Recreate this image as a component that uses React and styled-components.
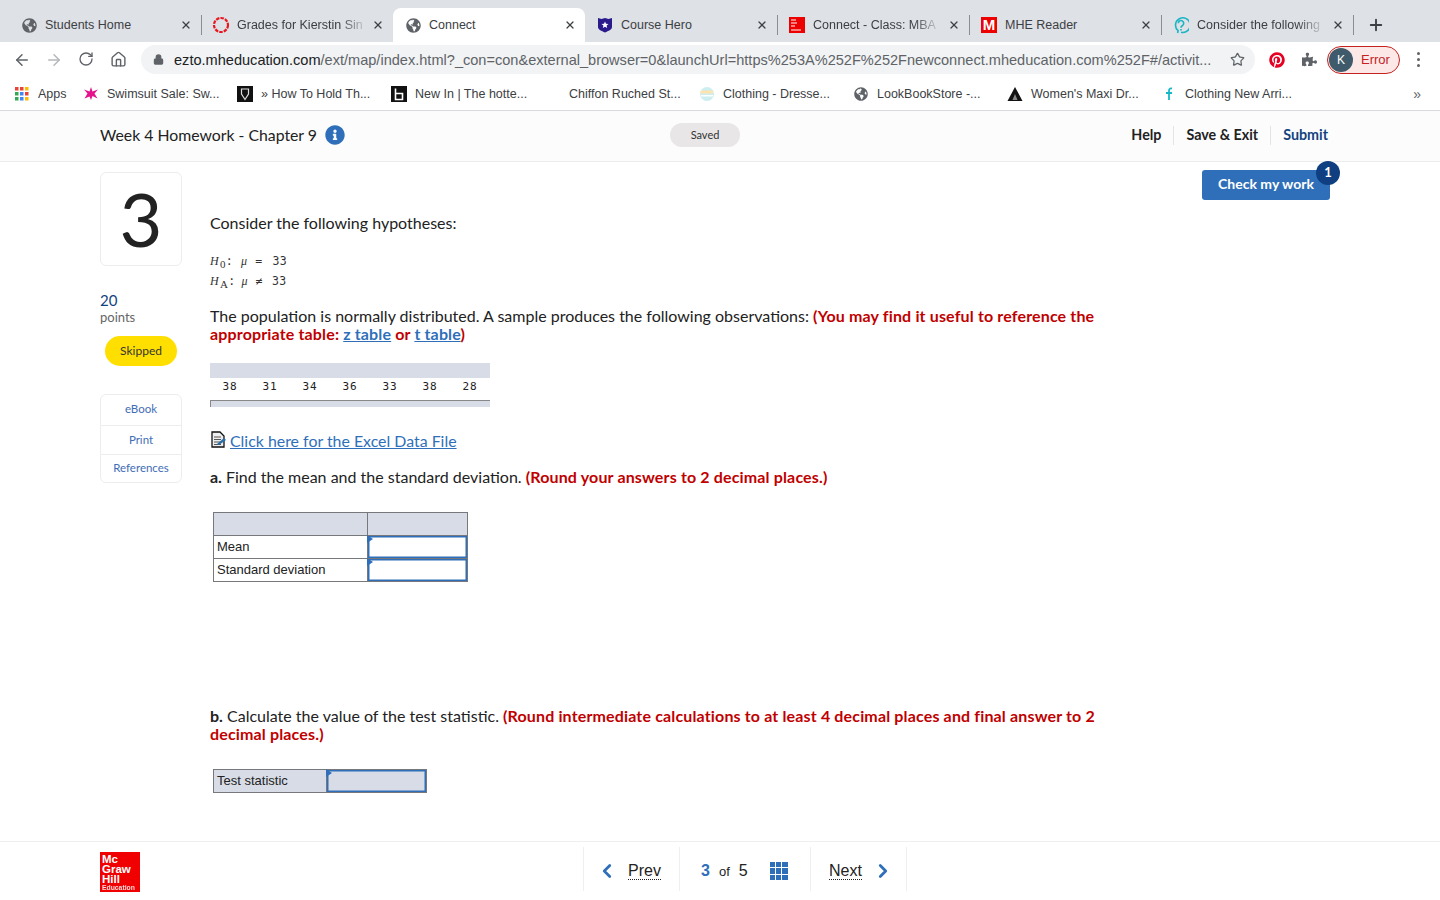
import React from 'react'
import styled, { createGlobalStyle } from 'styled-components'
import { ArrowLeft, ArrowRight, RotateCw, Home, Star, ChevronLeft, ChevronRight, Plus, X, Lock } from 'lucide-react'
import { FaGlobeAmericas, FaPinterest, FaPuzzlePiece, FaInfoCircle } from 'react-icons/fa'

const Global = createGlobalStyle`
  html, body { margin: 0; padding: 0; background: #fff; }
  body { font-family: 'Lato', 'Open Sans', sans-serif; color: #222; }
  * { box-sizing: border-box; }
`
const Window = styled.div`
  width: 1440px;
  height: 900px;
  display: flex;
  flex-direction: column;
  overflow: hidden;
`
const TabStrip = styled.div`
  height: 42px;
  flex: none;
  background: #dee1e6;
  display: flex;
  align-items: flex-end;
  padding-left: 9px;
`
const TabItem = styled.div`
  position: relative;
  width: 192px;
  height: 34px;
  flex: none;
  display: flex;
  align-items: center;
  padding: 0 9px 0 12px;
  border-radius: 8px 8px 0 0;
  background: ${p => (p.$active ? '#fff' : 'transparent')};
  font: 12.5px 'Liberation Sans', sans-serif;
  color: #3c4043;
  &::after {
    content: '';
    display: ${p => (p.$divider ? 'block' : 'none')};
    position: absolute;
    right: -1px;
    top: 7px;
    height: 20px;
    width: 1px;
    background: #8a8d91;
  }
`
const TabIcon = styled.span`
  width: 16px;
  height: 16px;
  flex: none;
  display: flex;
  align-items: center;
  justify-content: center;
  margin-right: 8px;
  color: #5f6368;
`
const TabTitle = styled.span`
  flex: 1;
  min-width: 0;
  white-space: nowrap;
  overflow: hidden;
`
const FadeText = styled.span`
  display: inline-block;
  -webkit-mask-image: ${p => (p.$fade ? 'linear-gradient(to right, #000 82%, rgba(0,0,0,.2))' : 'none')};
`
const MFav = styled.span`
  width: 16px;
  height: 16px;
  background: #ec0000;
  color: #fff;
  font: bold 15px/16px 'Liberation Sans', sans-serif;
  text-align: center;
`
const NewTab = styled.span`
  margin-left: 14px;
  height: 34px;
  display: flex;
  align-items: center;
  color: #3c4043;
`
const Toolbar = styled.div`
  height: 35px;
  flex: none;
  display: flex;
  align-items: center;
  background: #fff;
`
const NavIcon = styled.span`
  width: 32px;
  display: flex;
  justify-content: center;
  color: ${p => (p.$muted ? '#b5b8bb' : '#5f6368')};
`
const NavGroup = styled.div`
  display: flex;
  padding-left: 6px;
  width: 141px;
`
const Omnibox = styled.div`
  width: 1114px;
  height: 29px;
  border-radius: 15px;
  background: #f1f3f4;
  display: flex;
  align-items: center;
  padding-left: 12px;
  color: #5f6368;
`
const Url = styled.div`
  width: 1038px;
  margin-left: 10px;
  font: 14.57px 'Liberation Sans', sans-serif;
  color: #5f6368;
  white-space: nowrap;
  overflow: hidden;
  b { font-weight: 400; color: #202124; }
`
const StarWrap = styled.span`
  margin-left: 18px;
  display: flex;
  color: #5f6368;
`
const ExtIcon = styled.span`
  display: flex;
  color: ${p => p.$color};
  margin-left: ${p => p.$left}px;
`
const ErrorPill = styled.div`
  width: 73px;
  height: 28px;
  margin-left: 10px;
  border: 1px solid #c5221f;
  border-radius: 14px;
  background: #fce8e6;
  display: flex;
  align-items: center;
  padding-left: 1px;
  font: 13px 'Liberation Sans', sans-serif;
  color: #c5221f;
`
const Avatar = styled.span`
  width: 24px;
  height: 24px;
  border-radius: 50%;
  background: #3f5b6b;
  color: #fff;
  font-size: 12px;
  display: flex;
  align-items: center;
  justify-content: center;
  margin-right: 8px;
`
const Dots = styled.span`
  margin-left: 17px;
  display: flex;
  flex-direction: column;
  gap: 3px;
  i { width: 3px; height: 3px; border-radius: 50%; background: #5f6368; display: block; }
`
const Bookmarks = styled.div`
  height: 34px;
  flex: none;
  display: flex;
  align-items: center;
  border-bottom: 1px solid #d8dadd;
  background: #fff;
  padding-left: 14px;
  font: 12.5px 'Liberation Sans', sans-serif;
  color: #3c4043;
`
const Mark = styled.div`
  width: ${p => p.$width || 154}px;
  flex: none;
  display: flex;
  align-items: center;
  white-space: nowrap;
`
const MarkIcon = styled.span`
  width: 16px;
  height: 16px;
  flex: none;
  display: flex;
  align-items: center;
  justify-content: center;
  margin-right: 8px;
  color: #5f6368;
`
const More = styled.span`
  margin-left: auto;
  margin-right: 19px;
  color: #5f6368;
  font-size: 14px;
`
const AppHeader = styled.header`
  height: 51px;
  flex: none;
  display: grid;
  grid-template-columns: 570px 70px 1fr;
  align-items: center;
  padding: 0 112px 2px 100px;
  background: #fcfcfc;
  border-bottom: 1px solid #ececec;
`
const Title = styled.div`
  display: flex;
  align-items: center;
  gap: 8px;
  padding-bottom: 2px;
  font-size: 15.8px;
  color: #222;
  svg { color: #2f6fba; margin-top: 2px; }
`
const Saved = styled.div`
  height: 24px;
  border-radius: 12px;
  background: #e8e6e6;
  font-size: 11px;
  line-height: 23px;
  text-align: center;
  color: #333;
`
const HeaderLinks = styled.nav`
  display: flex;
  justify-content: flex-end;
  align-items: center;
`
const HeaderLink = styled.a`
  font-size: 14.3px;
  line-height: 18px;
  font-weight: 700;
  color: ${p => p.$color || '#222'};
  padding: 0 12px 1px;
  border-left: ${p => (p.$first ? 'none' : '1px solid #e4e4e4')};
  &:last-child { padding-right: 0; }
`
const Main = styled.main`
  flex: 1;
  min-height: 0;
  display: flex;
  padding: 10px 110px 0 100px;
`
const Side = styled.aside`
  width: 82px;
  flex: none;
`
const NumberBox = styled.div`
  height: 94px;
  border: 1px solid #ededed;
  border-radius: 6px;
  display: flex;
  align-items: center;
  justify-content: center;
  padding-bottom: 2px;
  font: 400 74px 'Lato', sans-serif;
  color: #222;
`
const Points = styled.div`
  margin-top: 25px;
  font-size: 15px;
  line-height: 18px;
  color: #13437f;
`
const PointsLabel = styled.div`
  font-size: 13px;
  line-height: 16px;
  color: #666;
`
const Skipped = styled.div`
  margin: 11px auto 0;
  width: 72px;
  height: 30px;
  border-radius: 15px;
  background: #ffdf00;
  font-size: 12px;
  line-height: 30px;
  text-align: center;
  color: #333;
`
const Tools = styled.div`
  margin-top: 28px;
  border: 1px solid #ededed;
  border-radius: 6px;
`
const ToolLink = styled.a`
  display: block;
  height: ${p => p.$h}px;
  line-height: ${p => p.$h - 2}px;
  text-align: center;
  font-size: 11.5px;
  color: #3f6db5;
  & + & { border-top: 1px solid #ededed; }
`
const Content = styled.section`
  width: 892px;
  margin-left: 28px;
  flex: none;
  padding-top: 42px;
  font-size: 16px;
  line-height: 18px;
  color: #222;
`
const Para = styled.p`
  margin: ${p => p.$top || 0}px 0 0;
`
const Red = styled.strong`
  color: #c00000;
  font-weight: 700;
  letter-spacing: .15px;
`
const Lnk = styled.a`
  color: #2f6fba;
  text-decoration: underline;
`
const Hyp = styled.div`
  margin-top: ${p => p.$top}px;
  height: 20px;
  display: flex;
  align-items: center;
  font: 11.5px 'DejaVu Sans Mono', monospace;
  letter-spacing: .3px;
  color: #333;
  em { font: italic 12px 'Liberation Serif', serif; margin-right: 1px; }
  sub { font: 11px 'Liberation Serif', serif; position: relative; top: 3px; vertical-align: baseline; }
`
const HypSym = styled.span`
  margin-left: ${p => p.$left || 7}px;
`
const DataTable = styled.div`
  margin-top: 20px;
  width: 280px;
`
const DataHead = styled.div`
  height: 15px;
  background: #d8dce6;
`
const DataRow = styled.div`
  height: 22px;
  display: grid;
  grid-template-columns: repeat(7, 40px);
  align-items: center;
  padding-bottom: 6px;
  text-align: center;
  font: 11px 'DejaVu Sans Mono', monospace;
  letter-spacing: .8px;
  color: #222;
`
const DataFoot = styled.div`
  height: 7px;
  background: #d8dce6;
  border-top: 1px solid #888;
  border-left: 1px solid #888;
`
const FileLine = styled.div`
  margin-top: 24px;
  height: 20px;
  display: flex;
  align-items: flex-start;
  font-size: 15.9px;
  line-height: 20px;
`
const Sheet = styled.table`
  margin: ${p => p.$top}px 0 0 3px;
  border-collapse: collapse;
  font: 13px 'Liberation Sans', sans-serif;
  color: #222;
  td { border: 1px solid #77787c; height: 23px; padding: 0 3px 2px; }
`
const HeadRow = styled.tr`
  background: #d8dce6;
`
const EntryCell = styled.td`
  position: relative;
  width: 100px;
  background: ${p => (p.$shade ? '#d8dce6' : '#fff')};
  box-shadow: inset 0 0 0 1.5px #2f6fba;
  &::before {
    content: '';
    position: absolute;
    left: -1px;
    top: -1px;
    border-left: 6px solid #2f6fba;
    border-top: 4px solid transparent;
    border-bottom: 4px solid transparent;
  }
`
const Right = styled.div`
  flex: 1;
  display: flex;
  justify-content: flex-end;
`
const CheckBtn = styled.button`
  position: relative;
  width: 128px;
  height: 30px;
  margin-top: -2px;
  border: 0;
  border-radius: 3px;
  padding: 0 0 3px;
  background: #2f6fba;
  color: #fff;
  font: 700 14px 'Lato', sans-serif;
`
const Badge = styled.span`
  position: absolute;
  right: -10px;
  top: -9px;
  width: 24px;
  height: 24px;
  border-radius: 50%;
  background: #0f3f80;
  color: #fff;
  font-size: 13px;
  line-height: 23px;
  text-align: center;
`
const Footer = styled.footer`
  height: 59px;
  flex: none;
  display: flex;
  border-top: 1px solid #efefef;
  padding: 5px 0 0 100px;
`
const Logo = styled.div`
  width: 40px;
  height: 40px;
  margin-top: 5px;
  flex: none;
  background: #f00000;
  color: #fff;
  padding: 2px 2px;
  font: 700 11.5px/10px 'Liberation Sans', sans-serif;
  small { display: block; font-size: 6.8px; line-height: 8px; opacity: .85; }
`
const Pager = styled.nav`
  margin-left: 443px;
  height: 44px;
  display: flex;
  border-right: 1px solid #efefef;
  font: 16px 'Liberation Sans', sans-serif;
  color: #222;
`
const PagerCell = styled.div`
  width: ${p => p.$w}px;
  border-left: 1px solid #efefef;
  display: flex;
  align-items: center;
  padding: 4px 0 0 ${p => p.$pad}px;
  svg { color: #2f6fba; flex: none; }
`
const Dotted = styled.span`
  margin: ${p => p.$m};
  border-bottom: 1px dotted #222;
  line-height: 16px;
`
const PageNum = styled.strong`
  color: #2f6fba;
  font-size: 16px;
`
const PageOf = styled.span`
  margin: 0 9px;
  font-size: 13px;
`
const GridIcon = styled.span`
  margin-left: 22px;
  width: 18px;
  height: 18px;
  display: grid;
  grid-template-columns: repeat(3, 1fr);
  gap: 1px;
  i { background: #2f6fba; display: block; }
`

const Globe = ({ size = 15 }) => <FaGlobeAmericas size={size} />

const RedRing = () => (
  <svg width="18" height="18" viewBox="0 0 18 18" style={{ flex: 'none' }}><circle cx="9" cy="9" r="7" fill="none" stroke="#e8171f" strokeWidth="2.200" strokeDasharray="3.500 1.100" /></svg>
)
const HeroShield = () => (
  <svg width="16" height="16" viewBox="0 0 16 16"><path d="M1 1l3.500 1L8 1l3.500 1L15 1v9c0 2.500-3.500 4-7 5.500C4.500 14 1 12.500 1 10z" fill="#2b1a8c" /><path d="M8 4.500l1 2.300 2.500.2-1.900 1.600.6 2.400L8 9.700 5.800 11l.6-2.400L4.500 7l2.500-.2z" fill="#fff" /></svg>
)
const McTiny = () => (
  <svg width="16" height="16" viewBox="0 0 16 16"><rect width="16" height="16" fill="#ec0000" /><path d="M2 3h5M2 6h6M2 9h4M2 13h10" stroke="#fff" strokeWidth="1.200" /></svg>
)
const TealQ = () => (
  <svg width="16" height="18" viewBox="0 0 16 18" fill="none" stroke="#19b5c4" strokeWidth="1.600" style={{ flex: 'none' }}>
    <path d="M4.600 17l.5-2.300A7.300 7.300 0 1 1 8 16.200" />
    <path d="M5.300 7.200a2.700 2.700 0 1 1 4.200 2.300c-1 .6-1.500 1.200-1.500 2.300" />
    <path d="M8 13v1.400" />
  </svg>
)
const AppsDots = () => (
  <svg width="14" height="14" viewBox="0 0 14 14">
    {['#ea4335', '#ea4335', '#fbbc04', '#34a853', '#4285f4', '#ea4335', '#34a853', '#4285f4', '#fbbc04'].map((c, i) => (
      <rect key={i} x={(i % 3) * 5} y={Math.floor(i / 3) * 5} width="3.500" height="3.500" fill={c} />
    ))}
  </svg>
)
const Flower = () => (
  <svg width="16" height="16" viewBox="0 0 16 16" fill="#e5128c"><path d="M8 1l1.500 4.500L15 3.500l-3.500 4 3 5-5-2.500L8 14 6.500 10.500l-5 2 3-5L1 3.500l5.500 2z" /></svg>
)
const BlackShield = () => (
  <svg width="16" height="16" viewBox="0 0 16 16"><rect width="16" height="16" fill="#111" /><path d="M4.500 3h7v5L8 13.500 4.500 8z" fill="none" stroke="#ddd" strokeWidth="1.200" /></svg>
)
const BlackB = () => (
  <svg width="16" height="16" viewBox="0 0 16 16"><rect width="16" height="16" fill="#111" /><path d="M4.500 2.500v11h7v-6h-7" fill="none" stroke="#fff" strokeWidth="1.600" /></svg>
)
const SunStripes = () => (
  <svg width="16" height="16" viewBox="0 0 16 16"><circle cx="8" cy="8" r="7" fill="#cdeef0" /><path d="M2 4.500h12v3H1z" fill="#fde3b0" /><path d="M2 9h12v1.500H2z" fill="#fff" /></svg>
)
const BlackPeak = () => (
  <svg width="16" height="16" viewBox="0 0 16 16"><path d="M8 1L15.500 15H.5z" fill="#111" /><path d="M8 8l2.500 6h-5z" fill="#888" /></svg>
)
const TealF = () => (
  <svg width="16" height="16" viewBox="0 0 16 16" fill="none" stroke="#16b8c8" strokeWidth="1.800"><path d="M11 2.500C8.500 2 8 3.500 8 5v9M5 7h6" /></svg>
)

const tabs = [
  { title: 'Students Home', icon: <Globe />, divider: true },
  { title: 'Grades for Kierstin Sin', icon: <RedRing />, fade: true },
  { title: 'Connect', icon: <Globe />, active: true },
  { title: 'Course Hero', icon: <HeroShield />, divider: true },
  { title: 'Connect - Class: MBA', icon: <McTiny />, fade: true, divider: true },
  { title: 'MHE Reader', icon: <MFav>M</MFav>, divider: true },
  { title: 'Consider the following', icon: <TealQ />, fade: true, divider: true },
]

const marks = [
  { title: 'Swimsuit Sale: Sw...', icon: <Flower /> },
  { title: '» How To Hold Th...', icon: <BlackShield /> },
  { title: 'New In | The hotte...', icon: <BlackB /> },
  { title: 'Chiffon Ruched St...', icon: null },
  { title: 'Clothing - Dresse...', icon: <SunStripes /> },
  { title: 'LookBookStore -...', icon: <Globe size={14} /> },
  { title: "Women's Maxi Dr...", icon: <BlackPeak /> },
  { title: 'Clothing New Arri...', icon: <TealF /> },
]

const App = () => {
  return (
    <Window>
      <Global />
      <TabStrip>
        {tabs.map(t => (
          <TabItem key={t.title} $active={t.active} $divider={t.divider}>
            <TabIcon>{t.icon}</TabIcon>
            <TabTitle><FadeText $fade={t.fade}>{t.title}</FadeText></TabTitle>
            <X size={12} strokeWidth={2.500} color="#3c4043" style={{ flex: 'none' }} />
          </TabItem>
        ))}
        <NewTab><Plus size={18} strokeWidth={2.500} /></NewTab>
      </TabStrip>
      <Toolbar>
        <NavGroup>
          <NavIcon><ArrowLeft size={18} /></NavIcon>
          <NavIcon $muted><ArrowRight size={18} /></NavIcon>
          <NavIcon><RotateCw size={16} /></NavIcon>
          <NavIcon><Home size={17} /></NavIcon>
        </NavGroup>
        <Omnibox>
          <Lock size={11} fill="#5f6368" strokeWidth={2.500} />
          <Url><b>ezto.mheducation.com</b>/ext/map/index.html?_con=con&amp;external_browser=0&amp;launchUrl=https%253A%252F%252Fnewconnect.mheducation.com%252F#/activit...</Url>
          <StarWrap><Star size={15} /></StarWrap>
        </Omnibox>
        <ExtIcon $color="#e60023" $left={14}><FaPinterest size={16} /></ExtIcon>
        <ExtIcon $color="#5f6368" $left={17}><FaPuzzlePiece size={15} /></ExtIcon>
        <ErrorPill><Avatar>K</Avatar>Error</ErrorPill>
        <Dots><i /><i /><i /></Dots>
      </Toolbar>
      <Bookmarks>
        <Mark $width={69}><MarkIcon><AppsDots /></MarkIcon>Apps</Mark>
        {marks.map(m => (
          <Mark key={m.title}><MarkIcon>{m.icon}</MarkIcon>{m.title}</Mark>
        ))}
        <More>»</More>
      </Bookmarks>
      <AppHeader>
        <Title>Week 4 Homework - Chapter 9 <FaInfoCircle size={20} /></Title>
        <Saved>Saved</Saved>
        <HeaderLinks>
          <HeaderLink $first>Help</HeaderLink>
          <HeaderLink>Save &amp; Exit</HeaderLink>
          <HeaderLink $color="#13437f">Submit</HeaderLink>
        </HeaderLinks>
      </AppHeader>
      <Main>
        <Side>
          <NumberBox>3</NumberBox>
          <Points>20</Points>
          <PointsLabel>points</PointsLabel>
          <Skipped>Skipped</Skipped>
          <Tools>
            <ToolLink $h={30}>eBook</ToolLink>
            <ToolLink $h={29}>Print</ToolLink>
            <ToolLink $h={28}>References</ToolLink>
          </Tools>
        </Side>
        <Content>
          <Para>Consider the following hypotheses:</Para>
          <Hyp $top={19}><em>H</em><sub>0</sub>: <HypSym $left={8}><em>μ</em></HypSym> <HypSym>=</HypSym> <HypSym $left={10}>33</HypSym></Hyp>
          <Hyp $top={0}><em>H</em><sub>A</sub>: <HypSym $left={6}><em>μ</em></HypSym> <HypSym>≠</HypSym> <HypSym $left={9}>33</HypSym></Hyp>
          <Para $top={16}>
            The population is normally distributed. A sample produces the following observations:{' '}
            <Red>(You may find it useful to reference the appropriate table: <Lnk>z table</Lnk> or <Lnk>t table</Lnk>)</Red>
          </Para>
          <DataTable>
            <DataHead />
            <DataRow>
              {[38, 31, 34, 36, 33, 38, 28].map((n, i) => <span key={i}>{n}</span>)}
            </DataRow>
            <DataFoot />
          </DataTable>
          <FileLine>
            <svg width="16" height="17" viewBox="0 0 16 17" style={{ margin: '0 3px 0 1px' }}>
              <path d="M1 1h8l4 4v11H1z" fill="#eee" stroke="#111" strokeWidth="1.300" />
              <path d="M3 6h7M3 8.500h7M3 11h7M3 13.500h7" stroke="#555" />
              <path d="M6 13l7-6 2 2-7 5z" fill="#2b6ea8" />
            </svg>
            <Lnk>Click here for the Excel Data File</Lnk>
          </FileLine>
          <Para $top={17}><strong>a.</strong> Find the mean and the standard deviation. <Red>(Round your answers to 2 decimal places.)</Red></Para>
          <Sheet $top={26}>
            <tbody>
              <HeadRow><td style={{ width: 154 }} /><td style={{ width: 100 }} /></HeadRow>
              <tr><td>Mean</td><EntryCell /></tr>
              <tr><td>Standard deviation</td><EntryCell /></tr>
            </tbody>
          </Sheet>
          <Para $top={125}><strong>b.</strong> Calculate the value of the test statistic. <Red>(Round intermediate calculations to at least 4 decimal places and final answer to 2 decimal places.)</Red></Para>
          <Sheet $top={26}>
            <tbody>
              <HeadRow><td style={{ width: 113 }}>Test statistic</td><EntryCell $shade /></HeadRow>
            </tbody>
          </Sheet>
        </Content>
        <Right>
          <CheckBtn>Check my work<Badge>1</Badge></CheckBtn>
        </Right>
      </Main>
      <Footer>
        <Logo>Mc<br />Graw<br />Hill<small>Education</small></Logo>
        <Pager>
          <PagerCell $w={96} $pad={12}>
            <ChevronLeft size={22} strokeWidth={3} />
            <Dotted $m="0 0 0 10px">Prev</Dotted>
          </PagerCell>
          <PagerCell $w={131} $pad={21}>
            <PageNum>3</PageNum><PageOf>of</PageOf>5
            <GridIcon>{Array.from({ length: 9 }).map((_, i) => <i key={i} />)}</GridIcon>
          </PagerCell>
          <PagerCell $w={96} $pad={18}>
            <Dotted $m="0 10px 0 0">Next</Dotted>
            <ChevronRight size={22} strokeWidth={3} />
          </PagerCell>
        </Pager>
      </Footer>
    </Window>
  )
}

export default App
